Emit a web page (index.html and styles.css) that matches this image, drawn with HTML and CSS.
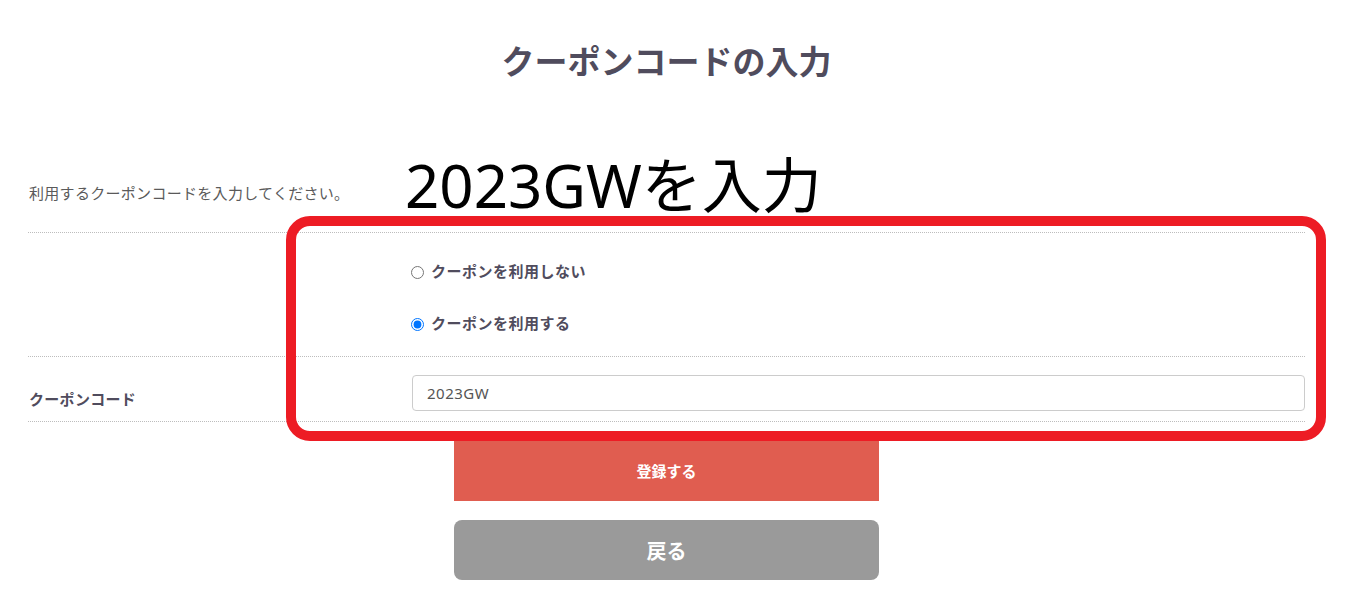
FILE: index.html
```html
<!DOCTYPE html>
<html lang="ja">
<head>
    <meta charset="UTF-8">
    <meta name="viewport" content="width=device-width, initial-scale=1.0">
    <title>クーポンコードの入力</title>
    <link rel="stylesheet" href="styles.css">
</head>
<body>
    <div class="page">
        <h1 class="title">クーポンコードの入力</h1>

        <div class="form">
            <div class="row row-intro">
                <div class="cell-label note">利用するクーポンコードを入力してください。</div>
                <div class="cell-value"></div>
            </div>
            <div class="row row-choice">
                <div class="cell-label"></div>
                <div class="cell-value choices">
                    <label class="radio"><input type="radio" name="use-coupon" value="no">クーポンを利用しない</label>
                    <label class="radio"><input type="radio" name="use-coupon" value="yes" checked>クーポンを利用する</label>
                </div>
            </div>
            <div class="row row-code">
                <div class="cell-label field-name">クーポンコード</div>
                <div class="cell-value">
                    <input type="text" class="code-input" value="2023GW">
                </div>
            </div>
        </div>

        <div class="buttons">
            <button class="btn btn-submit">登録する</button>
            <button class="btn btn-back">戻る</button>
        </div>

        <!-- 説明用の注記 -->
        <div class="note-text">2023GWを入力</div>
        <div class="note-box"></div>
    </div>
</body>
</html>
```

FILE: styles.css
```css
body {
    margin: 0;
    padding: 0;
    background-color: #fff;
    font-family: "Noto Sans CJK JP", "Noto Sans", sans-serif;
    color: #504c5d;
}
.page {
    position: relative;
    padding: 40px 48px 0 28px;
}
.title {
    margin: 0;
    font-size: 33px;
    line-height: 40px;
    font-weight: bold;
    text-align: center;
    color: #504c5d;
}
.form {
    margin-top: 73px;
}
.row {
    display: flex;
    align-items: flex-start;
    border-bottom: 1px dotted #bdbdbd;
}
.cell-label {
    width: 383px;
    flex-shrink: 0;
    font-size: 15px;
    line-height: 20px;
    letter-spacing: 0.3px;
}
.cell-value {
    flex: 1;
}
.row-intro {
    padding: 30px 0 29px;
}
.note {
    color: #5a5a5a;
    padding-left: 1px;
}
.row-choice {
    padding: 25px 0 22px;
}
.choices {
    display: flex;
    flex-direction: column;
    gap: 28px;
}
.radio {
    display: flex;
    align-items: center;
    height: 24px;
    font-size: 15px;
    letter-spacing: 0.5px;
    font-weight: bold;
    color: #504c5d;
}
.radio input {
    margin: 5px 7px 0 0;
    width: 13px;
    height: 13px;
}
.row-code {
    padding: 18px 0 10px;
}
.field-name {
    padding-top: 14px;
    padding-left: 1px;
    font-weight: bold;
}
.code-input {
    box-sizing: border-box;
    width: 100%;
    height: 36px;
    margin: 0;
    padding: 0 14px;
    border: 1px solid #cccccc;
    border-radius: 4px;
    font-family: "Noto Sans", "Noto Sans CJK JP", sans-serif;
    font-size: 15px;
    letter-spacing: 0.5px;
    color: #555;
}
.buttons {
    display: flex;
    flex-direction: column;
    align-items: center;
    gap: 19px;
    margin-top: 18px;
}
.btn {
    width: 425px;
    border: none;
    color: #fff;
    font-family: "Noto Sans CJK JP", "Noto Sans", sans-serif;
    font-weight: bold;
    cursor: pointer;
}
.btn-submit {
    height: 61px;
    background-color: #e05d50;
    font-size: 15px;
}
.btn-back {
    height: 60px;
    background-color: #9a9a9a;
    border-radius: 8px;
    font-size: 20px;
}
.note-text {
    position: absolute;
    left: 405px;
    top: 155px;
    font-family: "Noto Sans", "Noto Sans CJK JP", sans-serif;
    font-size: 60px;
    line-height: 60px;
    color: #000;
}
.note-box {
    position: absolute;
    left: 286px;
    top: 216px;
    width: 1020px;
    height: 205px;
    border: 10px solid #ed1c24;
    border-radius: 24px;
}
```
